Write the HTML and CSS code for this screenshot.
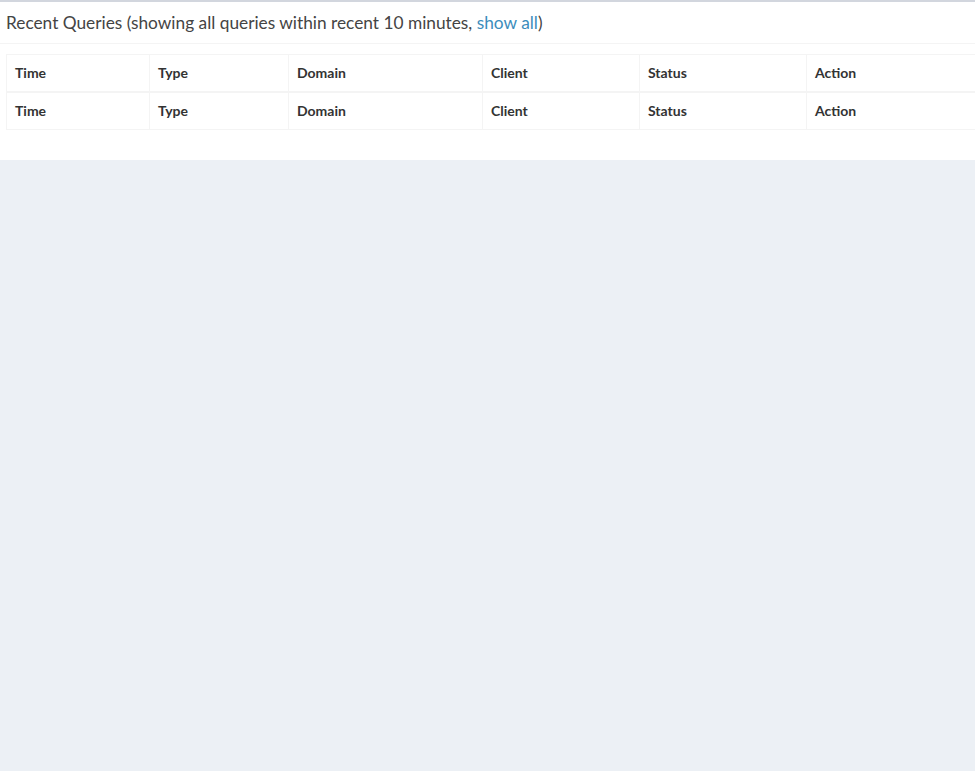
FILE: index.html
```html
<!DOCTYPE html>
<html>
<head>
<meta charset="utf-8">
<link rel="stylesheet" href="styles.css">
</head>
<body>
<div class="box">
  <div class="box-header">
    <h3 class="box-title">Recent Queries (showing all queries within recent 10 minutes, <a href="#">show all</a>)</h3>
  </div>
  <div class="box-body">
    <table class="table">
      <colgroup>
        <col class="c1"><col class="c2"><col class="c3"><col class="c4"><col class="c5"><col class="c6">
      </colgroup>
      <thead>
        <tr><th>Time</th><th>Type</th><th>Domain</th><th>Client</th><th>Status</th><th>Action</th></tr>
      </thead>
      <tfoot>
        <tr><th>Time</th><th>Type</th><th>Domain</th><th>Client</th><th>Status</th><th>Action</th></tr>
      </tfoot>
    </table>
  </div>
</div>
</body>
</html>
```
FILE: styles.css
```css
html, body {
  margin: 0;
  padding: 0;
  overflow: hidden;
}
body {
  background: #ecf0f5;
  font-family: "Lato", "Source Sans Pro", "Liberation Sans", sans-serif;
  color: #333;
  font-size: 14px;
  line-height: 20px;
}
.box {
  background: #fff;
  border-top: 2px solid #d2d6de;
  margin-left: -4px;
  width: 1000px;
  box-shadow: 0 1px 1px rgba(0, 0, 0, 0.1);
}
.box-header {
  padding: 10px;
  border-bottom: 1px solid #f4f4f4;
}
.box-title {
  margin: 0;
  font-size: 17.3px;
  line-height: 21px;
  font-weight: normal;
  color: #444;
}
.box-title a {
  color: #3c8dbc;
  text-decoration: none;
}
.box-body {
  padding: 10px;
}
.table {
  border-collapse: collapse;
  table-layout: fixed;
  width: 980px;
  margin-bottom: 20px;
  border: 1px solid #f4f4f4;
}
.c1 { width: 143px; }
.c2 { width: 139px; }
.c3 { width: 194px; }
.c4 { width: 157px; }
.c5 { width: 167px; }
.c6 { width: 180px; }
.table th {
  text-align: left;
  font-weight: bold;
  padding: 8px;
  border: 1px solid #f4f4f4;
  line-height: 20px;
  color: #333;
}
.table thead th {
  border-bottom: 2px solid #f4f4f4;
}
```
